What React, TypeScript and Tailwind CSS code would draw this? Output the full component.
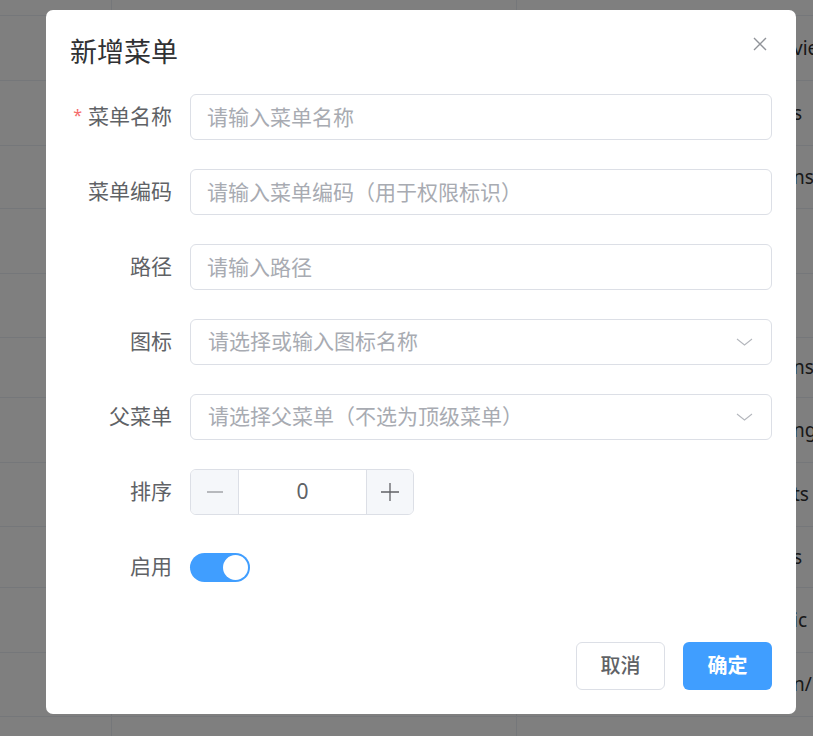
import { ReactNode } from "react"

const rows = [
  { h: "h-[16px]", text: "" },
  { h: "h-[65px]", text: "view" },
  { h: "h-[65px]", text: "s" },
  { h: "h-[63px]", text: "ns" },
  { h: "h-[65px]", text: "" },
  { h: "h-[64px]", text: "" },
  { h: "h-[60px]", text: "ns" },
  { h: "h-[65px]", text: "ng" },
  { h: "h-[64px]", text: "ts" },
  { h: "h-[61px]", text: "s" },
  { h: "h-[65px]", text: "ic" },
  { h: "h-[64px]", text: "n/" },
  { h: "h-[40px]", text: "" },
]

function Chevron() {
  return (
    <svg width="17" height="8" viewBox="0 0 17 8" fill="none">
      <path d="M1 1 L8.5 7 L16 1" stroke="#b4b7bd" strokeWidth="1.1" />
    </svg>
  )
}

function FormRow({ label, required, children }: { label: string; required?: boolean; children: ReactNode }) {
  return (
    <div className="flex items-center h-[46px] mb-[29px]">
      <div className="w-[120px] pr-[18px] flex justify-end items-center text-[21px] text-[#606266]">
        {required && <span className="text-[#f56c6c] text-[16px] mr-[6px] -mt-[4px]">*</span>}
        {label}
      </div>
      <div className="flex-1 h-full">{children}</div>
    </div>
  )
}

function TextInput({ placeholder }: { placeholder: string }) {
  return (
    <input
      placeholder={placeholder}
      className="w-full h-full rounded-[6px] border border-[#dcdfe6] px-[16px] text-[21px] text-[#606266] placeholder:text-[#a8abb2] outline-none bg-white"
    />
  )
}

function SelectInput({ placeholder }: { placeholder: string }) {
  return (
    <div className="w-full h-full rounded-[6px] border border-[#dcdfe6] pl-[17px] pr-[18px] flex items-center justify-between bg-white">
      <span className="text-[21px] text-[#a8abb2]">{placeholder}</span>
      <Chevron />
    </div>
  )
}

export default function App() {
  return (
    <div
      className="relative w-[813px] h-[736px] overflow-hidden bg-white"
      style={{ fontFamily: '"Noto Sans", "Noto Sans CJK SC", sans-serif' }}
    >
      {/* table underneath */}
      <div className="flex flex-col">
        {rows.map((r, i) => (
          <div key={i} className={`${r.h} grid grid-cols-[112px_405px_270px_1fr] border-b border-[#ebeef5]`}>
            <div className="border-r border-[#ebeef5]" />
            <div className="border-r border-[#ebeef5]" />
            <div />
            <div className="flex items-center pl-[6px] text-[19px] text-[#303133] whitespace-nowrap">{r.text}</div>
          </div>
        ))}
      </div>

      {/* mask + dialog */}
      <div className="absolute inset-0 bg-black/50 pt-[10px] pl-[46px]">
        <div className="relative w-[750px] h-[704px] bg-white rounded-[7px] px-[24px] flex flex-col">
          <div className="h-[84px] flex items-center">
            <span className="text-[27px] text-[#303133] leading-none -mt-[1px]">新增菜单</span>
          </div>
          <button className="absolute top-[27px] right-[29px] w-[14px] h-[14px]">
            <svg width="14" height="14" viewBox="0 0 14 14" fill="none">
              <path d="M1 1 L13 13 M13 1 L1 13" stroke="#909399" strokeWidth="1.4" />
            </svg>
          </button>

          <div className="flex flex-col">
            <FormRow label="菜单名称" required>
              <TextInput placeholder="请输入菜单名称" />
            </FormRow>
            <FormRow label="菜单编码">
              <TextInput placeholder="请输入菜单编码（用于权限标识）" />
            </FormRow>
            <FormRow label="路径">
              <TextInput placeholder="请输入路径" />
            </FormRow>
            <FormRow label="图标">
              <SelectInput placeholder="请选择或输入图标名称" />
            </FormRow>
            <FormRow label="父菜单">
              <SelectInput placeholder="请选择父菜单（不选为顶级菜单）" />
            </FormRow>
            <FormRow label="排序">
              <div className="w-[224px] h-full rounded-[6px] border border-[#dcdfe6] flex overflow-hidden">
                <div className="w-[48px] bg-[#f5f7fa] border-r border-[#dcdfe6] flex items-center justify-center">
                  <svg width="16" height="16" viewBox="0 0 16 16" fill="none">
                    <path d="M0 8 H16" stroke="#7a7c80" strokeWidth="1.2" />
                  </svg>
                </div>
                <div className="flex-1 flex items-center justify-center text-[21px] text-[#606266]">0</div>
                <div className="w-[47px] bg-[#f5f7fa] border-l border-[#dcdfe6] flex items-center justify-center">
                  <svg width="18" height="18" viewBox="0 0 18 18" fill="none">
                    <path d="M0 9 H18 M9 0 V18" stroke="#606266" strokeWidth="1.3" />
                  </svg>
                </div>
              </div>
            </FormRow>
            <FormRow label="启用">
              <div className="h-full flex items-center">
                <div className="w-[60px] h-[29px] rounded-full bg-[#409eff] flex items-center justify-end pr-[2px]">
                  <div className="w-[25px] h-[25px] rounded-full bg-white" />
                </div>
              </div>
            </FormRow>
          </div>

          <div className="mt-auto mb-[24px] flex justify-end gap-[18px]">
            <button className="w-[89px] h-[48px] rounded-[6px] border border-[#dcdfe6] bg-white text-[20px] font-medium text-[#606266]">
              取消
            </button>
            <button className="w-[89px] h-[48px] rounded-[6px] bg-[#409eff] text-[20px] font-bold text-white">
              确定
            </button>
          </div>
        </div>
      </div>
    </div>
  )
}
